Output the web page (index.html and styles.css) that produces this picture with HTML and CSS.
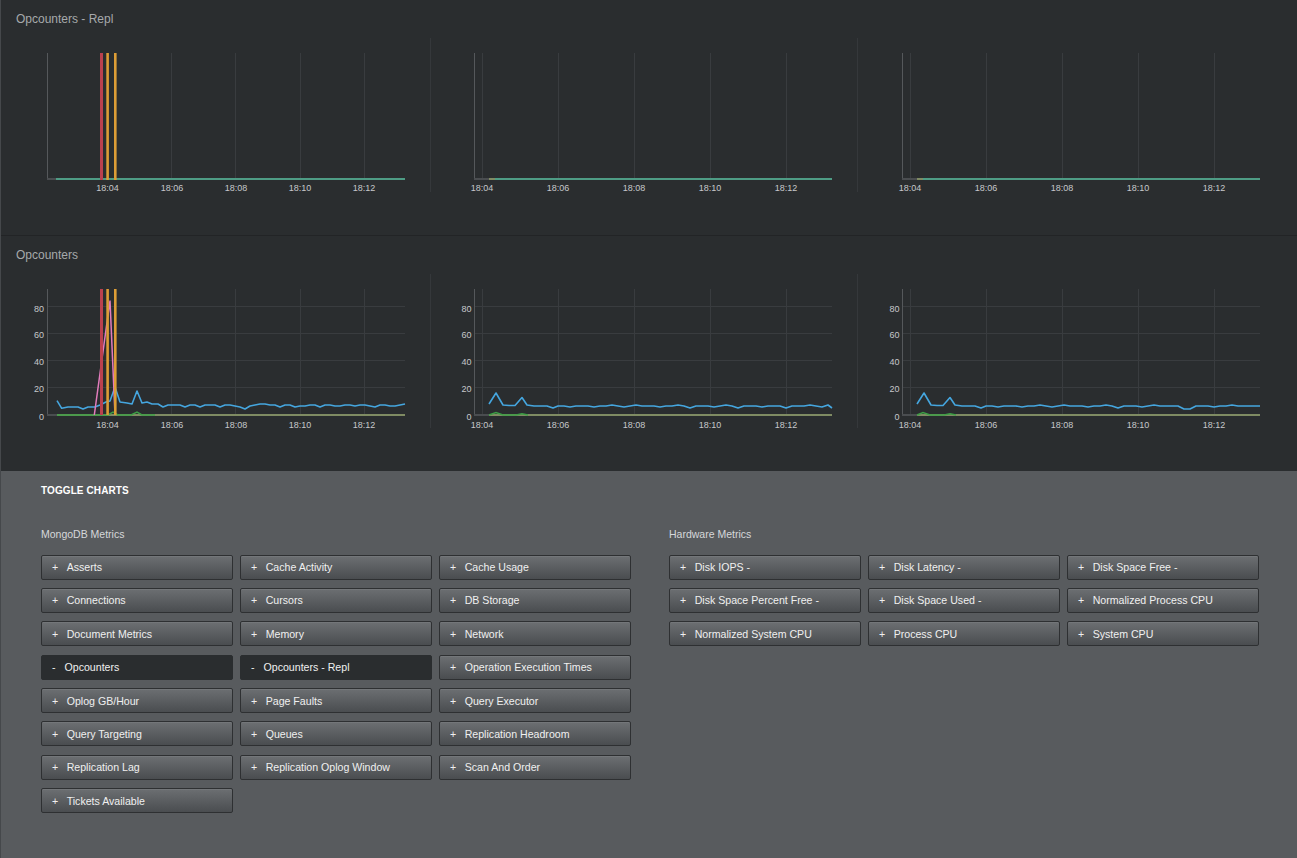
FILE: index.html
```html
<!DOCTYPE html>
<html lang="en">
<head>
<meta charset="utf-8">
<title>Opcounters</title>
<link rel="stylesheet" href="styles.css">
</head>
<body>
<div class="page">
  <section class="chart-section first">
    <h2 class="section-title">Opcounters - Repl</h2>
    <div class="chart-row">
      <div class="chart-cell">
        <svg viewBox="3 38 427 154" preserveAspectRatio="none">
          <g class="grid">
            <line x1="171.5" y1="53" x2="171.5" y2="179"/>
            <line x1="235.5" y1="53" x2="235.5" y2="179"/>
            <line x1="300.5" y1="53" x2="300.5" y2="179"/>
            <line x1="364.5" y1="53" x2="364.5" y2="179"/>
          </g>
          <line class="axis" x1="47.5" y1="53" x2="47.5" y2="179"/>
          <line class="axis-base" x1="47" y1="179" x2="56" y2="179"/>
          <line class="teal" x1="56" y1="179" x2="405" y2="179"/>
          <rect class="bar-red" x="100" y="53" width="3" height="127"/>
          <rect class="bar-orange" x="106.3" y="53" width="2.6" height="127"/>
          <rect class="bar-orange" x="114" y="53" width="2.6" height="127"/>
          <g class="xlabels">
            <text x="107.5" y="191">18:04</text>
            <text x="172" y="191">18:06</text>
            <text x="236" y="191">18:08</text>
            <text x="300" y="191">18:10</text>
            <text x="364" y="191">18:12</text>
          </g>
        </svg>
      </div>
      <div class="chart-cell">
        <svg viewBox="431 38 426 154" preserveAspectRatio="none">
          <g class="grid">
            <line x1="482.5" y1="53" x2="482.5" y2="179"/>
            <line x1="558.5" y1="53" x2="558.5" y2="179"/>
            <line x1="634.5" y1="53" x2="634.5" y2="179"/>
            <line x1="710.5" y1="53" x2="710.5" y2="179"/>
            <line x1="786.5" y1="53" x2="786.5" y2="179"/>
          </g>
          <line class="axis" x1="474.5" y1="53" x2="474.5" y2="179"/>
          <line class="axis-base" x1="474" y1="179" x2="489" y2="179"/>
          <line class="olive" x1="489" y1="179" x2="495" y2="179"/>
          <line class="teal" x1="495" y1="179" x2="832" y2="179"/>
          <g class="xlabels">
            <text x="482" y="191">18:04</text>
            <text x="558" y="191">18:06</text>
            <text x="634" y="191">18:08</text>
            <text x="710" y="191">18:10</text>
            <text x="786" y="191">18:12</text>
          </g>
        </svg>
      </div>
      <div class="chart-cell">
        <svg viewBox="858 38 426 154" preserveAspectRatio="none">
          <g class="grid">
            <line x1="910.5" y1="53" x2="910.5" y2="179"/>
            <line x1="986.5" y1="53" x2="986.5" y2="179"/>
            <line x1="1062.5" y1="53" x2="1062.5" y2="179"/>
            <line x1="1138.5" y1="53" x2="1138.5" y2="179"/>
            <line x1="1214.5" y1="53" x2="1214.5" y2="179"/>
          </g>
          <line class="axis" x1="902.5" y1="53" x2="902.5" y2="179"/>
          <line class="axis-base" x1="902" y1="179" x2="917" y2="179"/>
          <line class="olive" x1="917" y1="179" x2="923" y2="179"/>
          <line class="teal" x1="923" y1="179" x2="1260" y2="179"/>
          <g class="xlabels">
            <text x="910" y="191">18:04</text>
            <text x="986" y="191">18:06</text>
            <text x="1062" y="191">18:08</text>
            <text x="1138" y="191">18:10</text>
            <text x="1214" y="191">18:12</text>
          </g>
        </svg>
      </div>
    </div>
  </section>

  <section class="chart-section second">
    <h2 class="section-title">Opcounters</h2>
    <div class="chart-row">
      <div class="chart-cell">
        <svg viewBox="3 274 427 154" preserveAspectRatio="none">
          <g class="grid">
            <line x1="47" y1="306.5" x2="405" y2="306.5"/>
            <line x1="47" y1="333.5" x2="405" y2="333.5"/>
            <line x1="47" y1="360.5" x2="405" y2="360.5"/>
            <line x1="47" y1="387.5" x2="405" y2="387.5"/>
            <line x1="171.5" y1="289" x2="171.5" y2="415"/>
            <line x1="235.5" y1="289" x2="235.5" y2="415"/>
            <line x1="300.5" y1="289" x2="300.5" y2="415"/>
            <line x1="364.5" y1="289" x2="364.5" y2="415"/>
          </g>
          <line class="axis" x1="47.5" y1="289" x2="47.5" y2="415"/>
          <line class="axis-base" x1="47" y1="415" x2="57" y2="415"/>
          <line class="olive" x1="57" y1="415" x2="405" y2="415"/>
          <polyline class="green" points="57,415 108,415 113,412 118,415 131,415 137,412 142,415 155,415"/>
          <polyline class="blue" points="57,400.7 61.7,408.3 68,407 78,407 83,409 88,407 95,407 100,405 106,402 110,401 115,387 120,402 127,403 132,404 137,391 142,403 147,402 152,404 158,404 163,407 168,405 175,405 180,405 185,407 190,405 195,405 200,407 205,405 210,405 215,405 220,407 225,405 230,405 235,406 240,407 245,409 250,406 255,405 260,404 265,404 270,405 275,405 280,407 285,405 290,405 295,407 300,406 305,406 310,405 315,405 320,407 325,405 330,405 335,406 340,406 345,405 350,405 355,406 360,405 365,405 370,406 375,407 380,405 385,405 390,406 395,406 400,405 405,404"/>
          <polyline class="pink" points="94.3,415 110,300.5 115,415"/>
          <rect class="bar-red" x="100" y="289" width="3" height="126"/>
          <rect class="bar-orange" x="106.3" y="289" width="2.6" height="126"/>
          <rect class="bar-orange" x="114" y="289" width="2.6" height="126"/>
          <g class="ylabels">
            <text x="44" y="311.5">80</text>
            <text x="44" y="338.3">60</text>
            <text x="44" y="365">40</text>
            <text x="44" y="391.8">20</text>
            <text x="44" y="420">0</text>
          </g>
          <g class="xlabels">
            <text x="107.5" y="427.5">18:04</text>
            <text x="172" y="427.5">18:06</text>
            <text x="236" y="427.5">18:08</text>
            <text x="300" y="427.5">18:10</text>
            <text x="364" y="427.5">18:12</text>
          </g>
        </svg>
      </div>
      <div class="chart-cell">
        <svg viewBox="431 274 426 154" preserveAspectRatio="none">
          <g class="grid">
            <line x1="474" y1="306.5" x2="832" y2="306.5"/>
            <line x1="474" y1="333.5" x2="832" y2="333.5"/>
            <line x1="474" y1="360.5" x2="832" y2="360.5"/>
            <line x1="474" y1="387.5" x2="832" y2="387.5"/>
            <line x1="482.5" y1="289" x2="482.5" y2="415"/>
            <line x1="558.5" y1="289" x2="558.5" y2="415"/>
            <line x1="634.5" y1="289" x2="634.5" y2="415"/>
            <line x1="710.5" y1="289" x2="710.5" y2="415"/>
            <line x1="786.5" y1="289" x2="786.5" y2="415"/>
          </g>
          <line class="axis" x1="474.5" y1="289" x2="474.5" y2="415"/>
          <line class="axis-base" x1="474" y1="415" x2="489" y2="415"/>
          <line class="olive" x1="489" y1="415" x2="832" y2="415"/>
          <polyline class="green" points="489,415 496,412.6 503,415 516,415 522,413.8 528,415"/>
          <polyline class="blue" points="489,404 496,393 503,405 509,405.5 515,405.5 522,397.5 527,405 534,406 541,406 547,406 553,408 558,406 564,406 570,407 576,406 582,406 588,406 594,407 600,406 606,406 612,405 618,406 624,407 630,406 636,405 642,406 648,406 654,406 660,407 666,406 672,406 678,405 684,406 690,408 696,406 702,406 708,406 714,407 720,406 726,405 732,406 738,408 744,406 750,406 756,406 762,407 768,406 774,406 780,406 786,408 792,406 798,406 804,406 810,405 816,406 822,407 828,405 832,408"/>
          <g class="ylabels">
            <text x="471.5" y="311.5">80</text>
            <text x="471.5" y="338.3">60</text>
            <text x="471.5" y="365">40</text>
            <text x="471.5" y="391.8">20</text>
            <text x="471.5" y="420">0</text>
          </g>
          <g class="xlabels">
            <text x="482" y="427.5">18:04</text>
            <text x="558" y="427.5">18:06</text>
            <text x="634" y="427.5">18:08</text>
            <text x="710" y="427.5">18:10</text>
            <text x="786" y="427.5">18:12</text>
          </g>
        </svg>
      </div>
      <div class="chart-cell">
        <svg viewBox="858 274 426 154" preserveAspectRatio="none">
          <g class="grid">
            <line x1="902" y1="306.5" x2="1260" y2="306.5"/>
            <line x1="902" y1="333.5" x2="1260" y2="333.5"/>
            <line x1="902" y1="360.5" x2="1260" y2="360.5"/>
            <line x1="902" y1="387.5" x2="1260" y2="387.5"/>
            <line x1="910.5" y1="289" x2="910.5" y2="415"/>
            <line x1="986.5" y1="289" x2="986.5" y2="415"/>
            <line x1="1062.5" y1="289" x2="1062.5" y2="415"/>
            <line x1="1138.5" y1="289" x2="1138.5" y2="415"/>
            <line x1="1214.5" y1="289" x2="1214.5" y2="415"/>
          </g>
          <line class="axis" x1="902.5" y1="289" x2="902.5" y2="415"/>
          <line class="axis-base" x1="902" y1="415" x2="917" y2="415"/>
          <line class="olive" x1="917" y1="415" x2="1260" y2="415"/>
          <polyline class="green" points="917,415 923,412.6 930,415 944,415 950,413.8 956,415"/>
          <polyline class="blue" points="917,404 924,393 931,405 937,405.5 943,405.5 950,397.5 955,405 962,406 969,406 975,406 981,408 986,406 992,406 998,407 1004,406 1010,406 1016,406 1022,407 1028,406 1034,406 1040,405 1046,406 1052,407 1058,406 1064,405 1070,406 1076,406 1082,406 1088,407 1094,406 1100,406 1106,405 1112,406 1118,408 1124,406 1130,406 1136,406 1142,407 1148,406 1154,405 1160,406 1166,406 1172,406 1178,406 1184,409 1190,409 1196,406 1202,406 1208,406 1214,407 1220,406 1226,406 1232,405 1238,406 1244,406 1250,406 1256,406 1260,406"/>
          <g class="ylabels">
            <text x="899.5" y="311.5">80</text>
            <text x="899.5" y="338.3">60</text>
            <text x="899.5" y="365">40</text>
            <text x="899.5" y="391.8">20</text>
            <text x="899.5" y="420">0</text>
          </g>
          <g class="xlabels">
            <text x="910" y="427.5">18:04</text>
            <text x="986" y="427.5">18:06</text>
            <text x="1062" y="427.5">18:08</text>
            <text x="1138" y="427.5">18:10</text>
            <text x="1214" y="427.5">18:12</text>
          </g>
        </svg>
      </div>
    </div>
  </section>

  <section class="toggle-panel">
    <h3 class="toggle-title">TOGGLE CHARTS</h3>
    <div class="groups">
      <div class="group">
        <div class="group-label">MongoDB Metrics</div>
        <div class="btn-grid">
          <div class="btn"><span class="sign">+</span>Asserts</div>
          <div class="btn"><span class="sign">+</span>Cache Activity</div>
          <div class="btn"><span class="sign">+</span>Cache Usage</div>
          <div class="btn"><span class="sign">+</span>Connections</div>
          <div class="btn"><span class="sign">+</span>Cursors</div>
          <div class="btn"><span class="sign">+</span>DB Storage</div>
          <div class="btn"><span class="sign">+</span>Document Metrics</div>
          <div class="btn"><span class="sign">+</span>Memory</div>
          <div class="btn"><span class="sign">+</span>Network</div>
          <div class="btn active"><span class="sign minus">-</span>Opcounters</div>
          <div class="btn active"><span class="sign minus">-</span>Opcounters - Repl</div>
          <div class="btn"><span class="sign">+</span>Operation Execution Times</div>
          <div class="btn"><span class="sign">+</span>Oplog GB/Hour</div>
          <div class="btn"><span class="sign">+</span>Page Faults</div>
          <div class="btn"><span class="sign">+</span>Query Executor</div>
          <div class="btn"><span class="sign">+</span>Query Targeting</div>
          <div class="btn"><span class="sign">+</span>Queues</div>
          <div class="btn"><span class="sign">+</span>Replication Headroom</div>
          <div class="btn"><span class="sign">+</span>Replication Lag</div>
          <div class="btn"><span class="sign">+</span>Replication Oplog Window</div>
          <div class="btn"><span class="sign">+</span>Scan And Order</div>
          <div class="btn"><span class="sign">+</span>Tickets Available</div>
        </div>
      </div>
      <div class="group">
        <div class="group-label">Hardware Metrics</div>
        <div class="btn-grid">
          <div class="btn"><span class="sign">+</span>Disk IOPS -</div>
          <div class="btn"><span class="sign">+</span>Disk Latency -</div>
          <div class="btn"><span class="sign">+</span>Disk Space Free -</div>
          <div class="btn"><span class="sign">+</span>Disk Space Percent Free -</div>
          <div class="btn"><span class="sign">+</span>Disk Space Used -</div>
          <div class="btn"><span class="sign">+</span>Normalized Process CPU</div>
          <div class="btn"><span class="sign">+</span>Normalized System CPU</div>
          <div class="btn"><span class="sign">+</span>Process CPU</div>
          <div class="btn"><span class="sign">+</span>System CPU</div>
        </div>
      </div>
    </div>
  </section>
</div>
</body>
</html>
```

FILE: styles.css
```css
html, body {
  margin: 0;
  padding: 0;
  background: #2a2d2f;
  font-family: "Liberation Sans", Arial, sans-serif;
}

.page {
  border-left: 1px solid #45484b;
  min-height: 858px;
  display: flex;
  flex-direction: column;
}

.chart-section {
  box-sizing: border-box;
  background: #2a2d2f;
}

.chart-section.first {
  height: 236px;
  border-bottom: 1px solid #222426;
}

.chart-section.second {
  height: 235px;
}

.section-title {
  margin: 0;
  height: 38px;
  box-sizing: border-box;
  padding: 12px 0 0 15px;
  font-size: 12px;
  line-height: 14px;
  font-weight: normal;
  color: #a6a9ab;
}

.chart-row {
  display: grid;
  grid-template-columns: 427px 427px 427px;
  padding-left: 2px;
}

.chart-cell {
  height: 154px;
}

.chart-cell + .chart-cell {
  border-left: 1px solid #35383b;
}

.chart-cell svg {
  display: block;
  width: 100%;
  height: 154px;
}

.grid line {
  stroke: #393c3f;
  stroke-width: 1;
  shape-rendering: crispEdges;
}

.axis {
  stroke: #55585b;
  stroke-width: 1;
  shape-rendering: crispEdges;
}

.axis-base {
  stroke: #4a4d50;
  stroke-width: 2;
}

.teal {
  stroke: #4e9c85;
  stroke-width: 2;
}

.olive {
  stroke: #7f8b63;
  stroke-width: 2;
}

.green {
  fill: none;
  stroke: #3d9e45;
  stroke-width: 1.5;
}

.blue {
  fill: none;
  stroke: #45a6df;
  stroke-width: 1.6;
  stroke-linejoin: round;
}

.pink {
  fill: none;
  stroke: #e27cbc;
  stroke-width: 1.5;
}

.bar-red {
  fill: #bb414e;
}

.bar-orange {
  fill: #dd9d36;
}

.xlabels text {
  font-family: "Liberation Sans", Arial, sans-serif;
  font-size: 9px;
  fill: #c6c8ca;
  text-anchor: middle;
}

.ylabels text {
  font-family: "Liberation Sans", Arial, sans-serif;
  font-size: 9px;
  fill: #c6c8ca;
  text-anchor: end;
}

.toggle-panel {
  flex: 1;
  background: #585b5e;
  padding: 13px 0 40px 40px;
}

.toggle-title {
  margin: 0;
  font-size: 10px;
  line-height: 14px;
  font-weight: bold;
  color: #ffffff;
  letter-spacing: 0.1px;
}

.groups {
  display: flex;
  gap: 38px;
  margin-top: 29px;
}

.group-label {
  font-size: 10.5px;
  line-height: 14px;
  color: #d6d8da;
  margin-bottom: 13.5px;
}

.btn-grid {
  display: grid;
  grid-template-columns: repeat(3, 192px);
  column-gap: 7px;
  row-gap: 8.4px;
}

.btn {
  height: 25px;
  box-sizing: border-box;
  border: 1px solid #2e3032;
  border-radius: 2px;
  background: linear-gradient(#6c6f72, #4a4d50);
  box-shadow: inset 0 1px 0 rgba(255, 255, 255, 0.06);
  color: #f0f0f0;
  font-size: 10.6px;
  display: flex;
  align-items: center;
  padding-left: 10px;
  white-space: nowrap;
}

.btn.active {
  background: #2a2d2f;
  border-color: #2a2d2f;
  box-shadow: none;
}

.sign {
  margin-right: 8.5px;
}

.sign.minus {
  margin-right: 9px;
}
```
